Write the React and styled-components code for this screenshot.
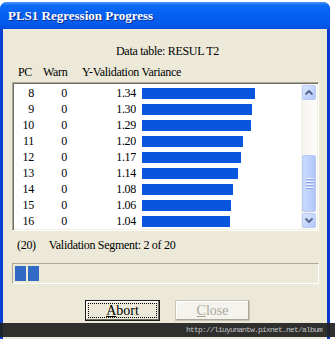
import React from "react";
import styled, { createGlobalStyle } from "styled-components";

const rows = [
  { pc: 8, warn: 0, value: 1.34 },
  { pc: 9, warn: 0, value: 1.3 },
  { pc: 10, warn: 0, value: 1.29 },
  { pc: 11, warn: 0, value: 1.2 },
  { pc: 12, warn: 0, value: 1.17 },
  { pc: 13, warn: 0, value: 1.14 },
  { pc: 14, warn: 0, value: 1.08 },
  { pc: 15, warn: 0, value: 1.06 },
  { pc: 16, warn: 0, value: 1.04 },
];

function App() {
  return (
    <>
      <GlobalStyle />
      <Desktop>
        <Window>
          <TitleBar>PLS1 Regression Progress</TitleBar>
          <Body>
            <Caption>Data table: RESUL T2</Caption>
            <Header>
              <HeadPC>PC</HeadPC>
              <HeadWarn>Warn</HeadWarn>
              <span>Y-Validation Variance</span>
            </Header>

            <ListBox>
              <Rows>
                {rows.map((row) => (
                  <Row key={row.pc}>
                    <Cell>{row.pc}</Cell>
                    <Cell>{row.warn}</Cell>
                    <Cell>{row.value.toFixed(2)}</Cell>
                    <BarTrack>
                      <Bar style={{ width: Math.round(row.value * 84.3) }} />
                    </BarTrack>
                  </Row>
                ))}
              </Rows>
              <ScrollBar>
                <ScrollButton>
                  <Arrow viewBox="0 0 8 5">
                    <path d="M0.5 4.5 L4 1 L7.5 4.5" />
                  </Arrow>
                </ScrollButton>
                <Track>
                  <Thumb>
                    <Grip />
                    <Grip />
                    <Grip />
                    <Grip />
                  </Thumb>
                </Track>
                <ScrollButton>
                  <Arrow viewBox="0 0 8 5">
                    <path d="M0.5 0.5 L4 4 L7.5 0.5" />
                  </Arrow>
                </ScrollButton>
              </ScrollBar>
            </ListBox>

            <Segment>
              <span>(20)</span>
              <span>Validation Segment: 2 of 20</span>
            </Segment>

            <Progress>
              <Block />
              <Block />
            </Progress>

            <Buttons>
              <Button focused>
                <Focus>
                  <u>A</u>bort
                </Focus>
              </Button>
              <Button disabled>
                <Focus>
                  <u>C</u>lose
                </Focus>
              </Button>
            </Buttons>
          </Body>
        </Window>
        <Watermark>http://liuyunantw.pixnet.net/album</Watermark>
      </Desktop>
    </>
  );
}

const GlobalStyle = createGlobalStyle`
  body {
    margin: 0;
    background: #fff;
  }
`;

const Desktop = styled.div`
  position: relative;
  width: 335px;
  height: 339px;
  overflow: hidden;
  padding-top: 2px;
  box-sizing: border-box;
  background: #fff;
  font-family: "Liberation Serif", "Times New Roman", serif;
  font-size: 12px;
  letter-spacing: -0.3px;
  color: #000;
`;

const Window = styled.div`
  width: 330px;
  height: 337px;
  display: flex;
  flex-direction: column;
  background: linear-gradient(90deg, #0a3fd6 0%, #0b55e6 50%, #0839c8 100%);
  border-radius: 7px 7px 0 0;
  overflow: hidden;
`;

const TitleBar = styled.div`
  height: 27px;
  flex: none;
  display: flex;
  align-items: center;
  padding: 1px 0 0 8px;
  box-sizing: border-box;
  background: linear-gradient(
    180deg,
    #4a98fb 0%,
    #0d6af6 12%,
    #0560f2 45%,
    #055cee 75%,
    #0050e2 100%
  );
  color: #fff;
  font-size: 13px;
  font-weight: bold;
  letter-spacing: 0;
  text-shadow: 1px 1px 0 #0b2a8a;
`;

const Body = styled.div`
  flex: 1;
  margin: 0 3px;
  padding: 14px 8px 0 9px;
  display: flex;
  flex-direction: column;
  background: #ece9d8;
`;

const Caption = styled.div`
  height: 16px;
  line-height: 16px;
  text-align: center;
  padding-left: 4px;
`;

const Header = styled.div`
  height: 16px;
  line-height: 16px;
  margin-top: 5px;
  display: flex;
  padding-left: 6px;
`;

const HeadPC = styled.span`
  width: 25px;
`;

const HeadWarn = styled.span`
  width: 39px;
`;

const ListBox = styled.div`
  margin-top: 2px;
  height: 149px;
  box-sizing: border-box;
  display: flex;
  background: #fff;
  border: 1px solid;
  border-color: #aca899 #fff #fff #aca899;
  box-shadow: inset 1px 1px 0 #716f64, inset -1px -1px 0 #f1efe2;
`;

const Rows = styled.div`
  flex: 1;
  padding: 2px 0 0 1px;
`;

const Row = styled.div`
  height: 16px;
  display: grid;
  grid-template-columns: 20px 33px 69px 1fr;
  align-items: center;
`;

const Cell = styled.span`
  text-align: right;
  line-height: 16px;
`;

const BarTrack = styled.div`
  padding-left: 6px;
  display: flex;
  align-items: center;
`;

const Bar = styled.div`
  height: 11px;
  background: #0a55dd;
`;

const ScrollBar = styled.div`
  width: 16px;
  flex: none;
  display: flex;
  flex-direction: column;
  margin: 1px 1px 1px 0;
  background: linear-gradient(90deg, #f3f1ec, #fefefb);
`;

const ScrollButton = styled.div`
  height: 15px;
  margin: 1px;
  flex: none;
  display: flex;
  align-items: center;
  justify-content: center;
  border: 1px solid #b8cbf6;
  border-radius: 2px;
  box-sizing: border-box;
  background: linear-gradient(135deg, #dbe6fe 0%, #c1d4fc 60%, #b0c6f8 100%);
`;

const Arrow = styled.svg`
  width: 8px;
  height: 5px;
  fill: none;
  stroke: #4d6185;
  stroke-width: 1.8;
`;

const Track = styled.div`
  flex: 1;
  display: flex;
  flex-direction: column;
`;

const Thumb = styled.div`
  margin: 54px 1px 0;
  height: 57px;
  border: 1px solid #b8cbf6;
  border-radius: 2px;
  box-sizing: border-box;
  background: linear-gradient(90deg, #c9d9fd 0%, #bdd0fb 60%, #aec4f7 100%);
  display: flex;
  flex-direction: column;
  align-items: center;
  justify-content: center;
  gap: 1px;
`;

const Grip = styled.div`
  width: 7px;
  height: 1px;
  background: #eef3fe;
  border-bottom: 1px solid #8ca6e0;
`;

const Segment = styled.div`
  margin-top: 6px;
  height: 16px;
  line-height: 16px;
  display: flex;
  gap: 13px;
  padding-left: 5px;
`;

const Progress = styled.div`
  margin-top: 10px;
  height: 21px;
  box-sizing: border-box;
  display: flex;
  gap: 2px;
  padding: 2px;
  border: 1px solid;
  border-color: #aca899 #fff #fff #aca899;
`;

const Block = styled.div`
  width: 11px;
  background: #316ac5;
`;

const Buttons = styled.div`
  margin-top: 16px;
  display: flex;
  gap: 15px;
  padding-left: 73px;
`;

const Button = styled.div`
  width: 75px;
  height: 21px;
  box-sizing: border-box;
  padding: 2px;
  border: 1px solid ${(props) => (props.disabled ? "#c9c7ba" : "#1c1c1c")};
  background: ${(props) => (props.disabled ? "#f4f3ee" : "#ece9d8")};
  box-shadow: ${(props) =>
    props.disabled
      ? "inset -1px -1px 0 #aca899, inset 1px 1px 0 #fff"
      : "inset -1px -1px 0 #716f64, inset 1px 1px 0 #fff"};
  color: ${(props) => (props.disabled ? "#aca899" : "#000")};
  font-size: 14px;
  letter-spacing: 0;

  & > span {
    outline: ${(props) => (props.focused ? "1px dotted #000" : "none")};
  }
`;

const Focus = styled.span`
  height: 100%;
  display: flex;
  align-items: center;
  justify-content: center;
  line-height: 1;
  outline-offset: -1px;
`;

const Watermark = styled.div`
  position: absolute;
  left: 0;
  right: 0;
  top: 323px;
  height: 14px;
  background: rgba(32, 32, 32, 0.93);
  color: #c4c4c4;
  font-family: "Liberation Mono", "DejaVu Sans Mono", monospace;
  font-size: 8px;
  letter-spacing: -0.8px;
  line-height: 14px;
  text-align: right;
  padding-right: 13px;
`;

export default App;
